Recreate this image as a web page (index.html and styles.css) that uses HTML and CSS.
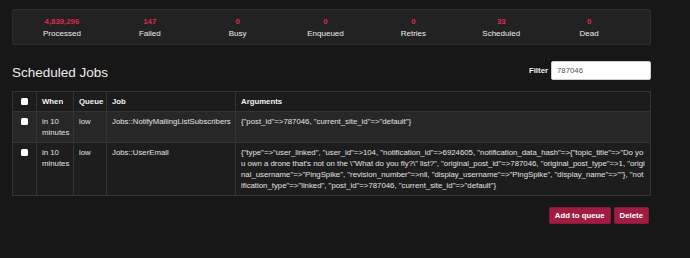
FILE: index.html
```html
<!DOCTYPE html>
<html>
<head>
<meta charset="utf-8">
<link rel="stylesheet" href="styles.css">
</head>
<body>
<div class="page">
  <div class="stats">
    <div class="stat"><div class="num">4,839,296</div><div class="label">Processed</div></div>
    <div class="stat"><div class="num">147</div><div class="label">Failed</div></div>
    <div class="stat"><div class="num">0</div><div class="label">Busy</div></div>
    <div class="stat"><div class="num">0</div><div class="label">Enqueued</div></div>
    <div class="stat"><div class="num">0</div><div class="label">Retries</div></div>
    <div class="stat"><div class="num">33</div><div class="label">Scheduled</div></div>
    <div class="stat"><div class="num">0</div><div class="label">Dead</div></div>
  </div>

  <div class="heading-row">
    <h3 class="title">Scheduled Jobs</h3>
    <form class="filter">
      <label class="filter-label">Filter</label>
      <input class="filter-input" type="text" value="787046">
    </form>
  </div>

  <table class="jobs">
    <colgroup>
      <col class="c-check"><col class="c-when"><col class="c-queue"><col class="c-job"><col>
    </colgroup>
    <thead>
      <tr>
        <th class="cb"><input type="checkbox" class="check"></th>
        <th>When</th>
        <th>Queue</th>
        <th>Job</th>
        <th>Arguments</th>
      </tr>
    </thead>
    <tbody>
      <tr class="odd">
        <td class="cb"><input type="checkbox" class="check"></td>
        <td>in 10 minutes</td>
        <td>low</td>
        <td>Jobs::NotifyMailingListSubscribers</td>
        <td class="args">{"post_id"=&gt;787046, "current_site_id"=&gt;"default"}</td>
      </tr>
      <tr class="even">
        <td class="cb"><input type="checkbox" class="check"></td>
        <td>in 10 minutes</td>
        <td>low</td>
        <td>Jobs::UserEmail</td>
        <td class="args">{"type"=&gt;"user_linked", "user_id"=&gt;104, "notification_id"=&gt;6924605, "notification_data_hash"=&gt;{"topic_title"=&gt;"Do you own a drone that's not on the \"What do you fly?\" list?", "original_post_id"=&gt;787046, "original_post_type"=&gt;1, "original_username"=&gt;"PingSpike", "revision_number"=&gt;nil, "display_username"=&gt;"PingSpike", "display_name"=&gt;""}, "notification_type"=&gt;"linked", "post_id"=&gt;787046, "current_site_id"=&gt;"default"}</td>
      </tr>
    </tbody>
  </table>

  <div class="actions">
    <button class="btn">Add to queue</button>
    <button class="btn">Delete</button>
  </div>
</div>
</body>
</html>
```

FILE: styles.css
```css
html, body {
  margin: 0;
  padding: 0;
  background: #171717;
}

body {
  font-family: "Liberation Sans", Arial, sans-serif;
  font-size: 7.8px;
  color: #e2e2e2;
}

.page {
  padding: 9px 39px 0 12px;
}

.stats {
  display: flex;
  background: #222222;
  border: 1px solid #2c2c2c;
  border-radius: 2px;
  padding: 6px 17px 4px 5px;
}

.stat {
  flex: 1;
  text-align: center;
}

.num {
  color: #dc2a4f;
  font-weight: bold;
  line-height: 12px;
}

.label {
  color: #ececec;
  font-size: 8px;
  line-height: 12px;
}

.heading-row {
  display: flex;
  justify-content: space-between;
  align-items: flex-end;
  margin-top: 16px;
}

.title {
  margin: 0;
  font-size: 13.5px;
  font-weight: normal;
  color: #ececec;
  line-height: 16px;
  position: relative;
  top: 1px;
}

.filter {
  display: flex;
  align-items: center;
  gap: 3px;
  margin: 0;
}

.filter-label {
  font-weight: bold;
  color: #f0f0f0;
}

.filter-input {
  width: 100px;
  height: 19px;
  box-sizing: border-box;
  border: 1px solid #ccc;
  border-radius: 2px;
  background: #fff;
  padding: 0 5px;
  font-family: "Liberation Sans", Arial, sans-serif;
  font-size: 7.8px;
  color: #555;
  margin: 0;
}

.jobs {
  width: 100%;
  margin-top: 11px;
  border-collapse: collapse;
  table-layout: fixed;
  border: 1px solid #333;
}

.c-check { width: 24px; }
.c-when { width: 37px; }
.c-queue { width: 33px; }
.c-job { width: 129px; }

.jobs th,
.jobs td {
  border: 1px solid #343434;
  padding: 4px 5px;
  line-height: 11px;
  text-align: left;
  vertical-align: top;
}

.jobs th {
  font-weight: bold;
  color: #f2f2f2;
  background: #1c1c1c;
}

.jobs .odd td {
  background: #272727;
}

.jobs .even td {
  background: #1d1d1d;
}

.jobs .cb {
  text-align: center;
  padding-left: 0;
  padding-right: 0;
}

.args {
  word-break: break-all;
}

.check {
  appearance: none;
  -webkit-appearance: none;
  width: 7px;
  height: 7px;
  margin: 2px 0 0;
  background: #fff;
  border-radius: 1.5px;
  border: none;
  display: inline-block;
  vertical-align: top;
}

.actions {
  display: flex;
  justify-content: flex-end;
  gap: 3px;
  margin: 11px 2px 0 0;
}

.btn {
  background: #9f1d41;
  color: #fff;
  border: 1px solid #8a1838;
  border-radius: 1.5px;
  font-family: "Liberation Sans", Arial, sans-serif;
  font-size: 7.8px;
  font-weight: bold;
  height: 17px;
  padding: 0 5px;
  margin: 0;
}
```
